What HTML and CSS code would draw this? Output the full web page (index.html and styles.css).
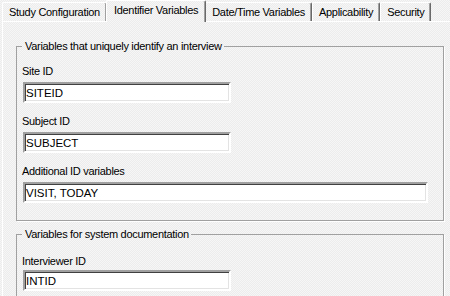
FILE: index.html
```html
<!DOCTYPE html>
<html lang="en">
<head>
  <meta charset="UTF-8" />
  <title>Identifier Variables</title>
  <link rel="stylesheet" href="styles.css">
</head>
<body>

<div class="tabs">
  <div class="tab">Study Configuration</div>
  <div class="tab active">Identifier Variables</div>
  <div class="tab">Date/Time Variables</div>
  <div class="tab">Applicability</div>
  <div class="tab">Security</div>
</div>

<div class="panel">
  <fieldset class="group">
    <legend>Variables that uniquely identify an interview</legend>
    <div class="field">
      <label>Site ID</label>
      <input class="box short" type="text" value="SITEID" />
    </div>
    <div class="field">
      <label>Subject ID</label>
      <input class="box short" type="text" value="SUBJECT" />
    </div>
    <div class="field last">
      <label>Additional ID variables</label>
      <input class="box long" type="text" value="VISIT, TODAY" />
    </div>
  </fieldset>

  <fieldset class="group second">
    <legend>Variables for system documentation</legend>
    <div class="field">
      <label>Interviewer ID</label>
      <input class="box short" type="text" value="INTID" />
    </div>
  </fieldset>
</div>

</body>
</html>
```

FILE: styles.css
```css
* { box-sizing: border-box; }
body {
  margin: 0;
  font-family: 'Liberation Sans', Arial, sans-serif;
  font-size: 11px;
  letter-spacing: -0.3px;
  line-height: 13px;
  color: #000;
  background: repeating-conic-gradient(#ececec 0 25%, #f6f6f6 0 50%) 0 0 / 2px 2px;
  height: 296px;
  overflow: hidden;
}
.tabs {
  display: flex;
  align-items: flex-end;
  height: 21px;
  padding-left: 2px;
}
.tab {
  height: 19px;
  padding: 3px 6px 2px 6px;
  border-top: 1px solid #fff;
  border-left: 1px solid #fff;
  border-right: 1px solid #696969;
  box-shadow: inset -1px 0 0 #a0a0a0;
  border-radius: 2px 2px 0 0;
  white-space: nowrap;
}
.tab.active {
  position: relative;
  z-index: 1;
  height: 22px;
  margin: 0 -1px -1px -1px;
  padding: 3px 7px 5px 7px;
  background: repeating-conic-gradient(#ececec 0 25%, #f6f6f6 0 50%) 0 0 / 2px 2px;
}
.panel {
  margin-left: 2px;
  border-top: 1px solid #fff;
  border-left: 1px solid #fff;
  padding: 18px 0 0 13px;
}
.group {
  width: 428px;
  margin: 0;
  padding: 12px 5px 17px 5px;
  border: 1px solid #a0a0a0;
  box-shadow: 1px 1px 0 #fff;
}
.group.second {
  margin-top: 7px;
  padding-top: 14px;
}
.group legend {
  padding: 0 2px 0 3px;
  line-height: 13px;
}
.field {
  margin-bottom: 12px;
}
.field.last {
  margin-bottom: 0;
}
.field label {
  display: block;
  height: 13px;
  margin-bottom: 4px;
}
.second .field label {
  margin-bottom: 2px;
}
.box {
  display: block;
  height: 21px;
  margin: 0 0 0 1px;
  padding: 1px 2px 0 1px;
  font-family: 'Liberation Sans', Arial, sans-serif;
  font-size: 11.5px;
  letter-spacing: 0;
  color: #000;
  background: #fff;
  border-style: solid;
  border-width: 2px;
  border-color: #a0a0a0 #fff #fff #a0a0a0;
  box-shadow: inset 1px 1px 0 #404040, inset -1px -1px 0 #e3e3e3;
  outline: none;
}
.box.short { width: 208px; }
.box.long { width: 405px; }
```
